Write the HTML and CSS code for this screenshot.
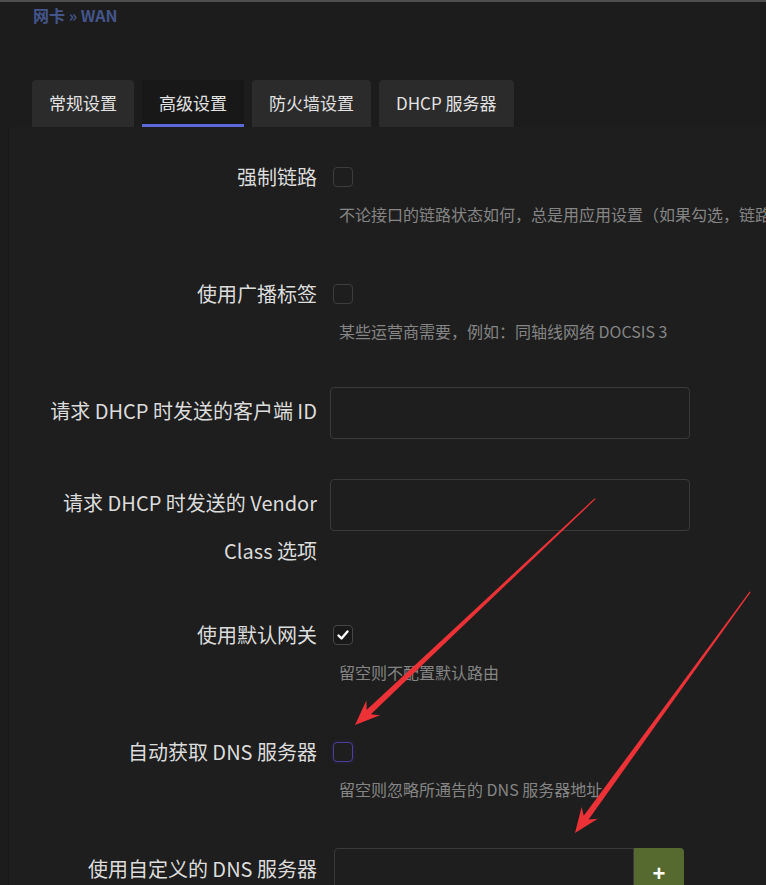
FILE: index.html
```html
<!DOCTYPE html>
<html lang="zh-CN">

<head>
    <meta charset="UTF-8">
    <title>网卡 - WAN</title>
    <meta name="viewport" content="width=device-width,initial-scale=1">
    <link rel="stylesheet" href="styles.css">
</head>

<body>
    <div class="topline"></div>
    <div class="page">
        <div class="crumb">网卡 » WAN</div>
        <ul class="tabs">
            <li class="tab">常规设置</li>
            <li class="tab active">高级设置</li>
            <li class="tab">防火墙设置</li>
            <li class="tab">DHCP 服务器</li>
        </ul>
        <div class="panel">
            <div class="row">
                <label class="title">强制链路</label>
                <div class="field">
                    <div class="line"><span class="cb"></span></div>
                    <div class="desc">不论接口的链路状态如何，总是用应用设置（如果勾选，链路状态变更时将不再调用热插拔事件处理程序）</div>
                </div>
            </div>
            <div class="row">
                <label class="title">使用广播标签</label>
                <div class="field">
                    <div class="line"><span class="cb"></span></div>
                    <div class="desc">某些运营商需要，例如：同轴线网络 DOCSIS 3</div>
                </div>
            </div>
            <div class="row row-input">
                <label class="title">请求 DHCP 时发送的客户端 ID</label>
                <div class="field">
                    <input class="text" type="text">
                </div>
            </div>
            <div class="row row-wrap">
                <label class="title">请求 DHCP 时发送的 Vendor Class 选项</label>
                <div class="field">
                    <input class="text" type="text">
                </div>
            </div>
            <div class="row">
                <label class="title">使用默认网关</label>
                <div class="field">
                    <div class="line">
                        <span class="cb checked">
                            <svg width="14" height="14" viewBox="0 0 14 14"><path d="M2.5 7.5l3 3 6-7" fill="none" stroke="#fff" stroke-width="2.4" stroke-linecap="round" stroke-linejoin="round"/></svg>
                        </span>
                    </div>
                    <div class="desc">留空则不配置默认路由</div>
                </div>
            </div>
            <div class="row">
                <label class="title">自动获取 DNS 服务器</label>
                <div class="field">
                    <div class="line"><span class="cb focus"></span></div>
                    <div class="desc">留空则忽略所通告的 DNS 服务器地址</div>
                </div>
            </div>
            <div class="row">
                <label class="title">使用自定义的 DNS 服务器</label>
                <div class="field">
                    <div class="dyn">
                        <input class="text short" type="text">
                        <button class="add" type="button">+</button>
                    </div>
                </div>
            </div>
        </div>
    </div>

    <!-- 截图上的红色标注箭头 -->
    <svg class="marks" width="766" height="885" viewBox="0 0 766 885">
        <g transform="translate(355 725) rotate(-43.3)">
            <polygon points="0,0 25,-10 19,-3 330,-0.6 330,0.6 19,3 25,10" fill="#ec3237"/>
        </g>
        <g transform="translate(575 833) rotate(-54)">
            <polygon points="0,0 25,-10 19,-3 298,-0.6 298,0.6 19,3 25,10" fill="#ec3237"/>
        </g>
    </svg>
</body>

</html>
```

FILE: styles.css
```css
html {
    overflow: hidden;
}

body {
    background: #1c1c1c;
    font-family: 'Noto Sans CJK SC', 'Liberation Sans', sans-serif;
    color: #dcdcdc;
    margin: 0;
    position: relative;
}

.topline {
    height: 2px;
    background: #4e4e4e;
}

.page {
    padding-left: 8px;
}

.crumb {
    padding-left: 25px;
    line-height: 26px;
    font-size: 16px;
    font-weight: bold;
    color: #44558b;
    margin-bottom: 52px;
}

.tabs {
    display: flex;
    gap: 8px;
    list-style: none;
    margin: 0;
    padding: 0 0 0 24px;
}

.tab {
    height: 47px;
    line-height: 46px;
    padding: 0 17px;
    font-size: 17px;
    color: #e2e2e2;
    background: #2b2b2b;
    border-radius: 4px 4px 0 0;
    box-sizing: border-box;
    white-space: nowrap;
}

.tab.active {
    background: #181818;
    box-shadow: inset 0 -3px #5b6ad8;
}

.panel {
    background: #1e1e1e;
    border-left: 1px solid #171717;
    padding: 26px 0 60px 20px;
    min-height: 800px;
}

.row {
    display: grid;
    grid-template-columns: 288px 1fr;
    column-gap: 15px;
    align-items: start;
    margin-bottom: 45px;
}

.row-input {
    margin-bottom: 40px;
}

.row-wrap {
    margin-bottom: 36px;
}

.title {
    text-align: right;
    font-size: 20px;
    line-height: 48px;
    color: #dcdcdc;
}

.field {
    min-width: 0;
}

.line {
    height: 48px;
    display: flex;
    align-items: center;
}

.cb {
    width: 20px;
    height: 20px;
    margin-left: 1px;
    box-sizing: border-box;
    border: 1px solid #3d3d3d;
    border-radius: 4px;
    background: #1e1e1e;
    display: flex;
    align-items: center;
    justify-content: center;
}

.cb.checked {
    background: #191919;
    border-color: #454545;
}

.cb.focus {
    border-color: #4b3f9f;
    box-shadow: 0 0 5px #4b3f9f44;
}

.desc {
    padding: 2px 0 0 7px;
    font-size: 16px;
    line-height: 22px;
    color: #858585;
    white-space: nowrap;
}

.text {
    display: block;
    width: 360px;
    height: 52px;
    margin-left: -2px;
    box-sizing: border-box;
    background: #1e1e1e;
    border: 1px solid #3a3a3a;
    border-radius: 4px;
    color: #ddd;
    font-size: 16px;
    padding: 0 10px;
}

.dyn {
    display: flex;
    margin-top: 3px;
    margin-left: 2px;
}

.text.short {
    width: 300px;
    margin-left: 0;
    border-radius: 4px 0 0 4px;
}

.add {
    width: 50px;
    height: 52px;
    border: none;
    border-radius: 0 4px 4px 0;
    background: #566a30;
    color: #fff;
    font-size: 22px;
    font-weight: bold;
    font-family: 'Liberation Sans', sans-serif;
    padding: 0;
}

.marks {
    position: absolute;
    top: 0;
    left: 0;
    pointer-events: none;
}
```
